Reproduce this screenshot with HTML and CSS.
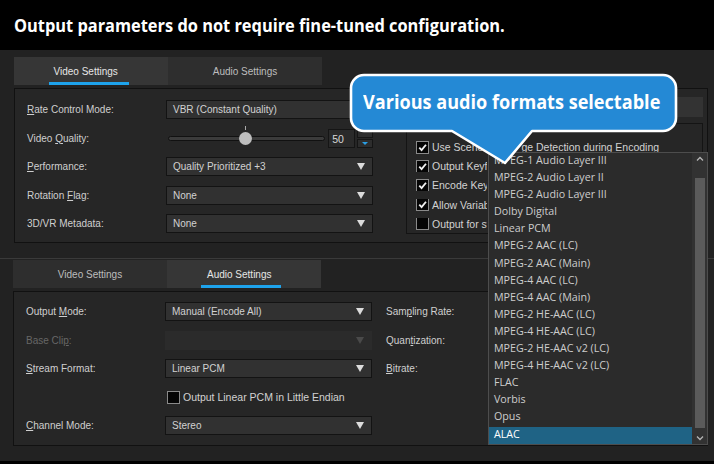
FILE: index.html
```html
<!DOCTYPE html>
<html>
<head>
<meta charset="utf-8">
<link rel="stylesheet" href="styles.css">
</head>
<body>
<div class="page">
  <header class="title"><span class="title-text">Output parameters do not require fine-tuned configuration.</span></header>

  <section class="shot shot-video">
    <div class="tabs">
      <div class="tab active"><span>Video Settings</span></div>
      <div class="tab"><span>Audio Settings</span></div>
    </div>
    <div class="panel video-panel">
      <div class="form">
        <div class="lbl"><u>R</u>ate Control Mode:</div>
        <div class="combo wide">VBR (Constant Quality)</div>

        <div class="lbl">Video <u>Q</u>uality:</div>
        <div class="quality">
          <div class="slider"><div class="track"></div><div class="tick"></div><div class="thumb"></div></div>
          <div class="spin">50</div>
          <div class="spinbtns"><div class="sb up"></div><div class="sb down"><i class="tri-blue"></i></div></div>
        </div>

        <div class="lbl"><u>P</u>erformance:</div>
        <div class="combo"><span>Quality Prioritized +3</span><i class="arrow"></i></div>

        <div class="lbl">Rotation <u>F</u>lag:</div>
        <div class="combo"><span>None</span><i class="arrow"></i></div>

        <div class="lbl">3D/VR Metadata:</div>
        <div class="combo"><span>None</span><i class="arrow"></i></div>
      </div>
      <div class="right">
        <div class="rbar"></div>
        <div class="group">
          <div class="chk-row"><span class="chk on"><svg viewBox="0 0 12 12"><path d="M2.5 6.2 L5 8.8 L9.8 3"/></svg></span><span class="scene-a">Use Scene</span><span class="scene-b">ge Detection during Encoding</span></div>
          <div class="chk-row clip"><span class="chk on"><svg viewBox="0 0 12 12"><path d="M2.5 6.2 L5 8.8 L9.8 3"/></svg></span>Output Keyframe Information</div>
          <div class="chk-row clip"><span class="chk on"><svg viewBox="0 0 12 12"><path d="M2.5 6.2 L5 8.8 L9.8 3"/></svg></span>Encode Keyframes as IDR</div>
          <div class="chk-row clip"><span class="chk on"><svg viewBox="0 0 12 12"><path d="M2.5 6.2 L5 8.8 L9.8 3"/></svg></span>Allow Variable Frame Rate</div>
          <div class="chk-row clip"><span class="chk"></span>Output for streaming</div>
        </div>
      </div>
    </div>
  </section>

  <div class="sep"></div>

  <section class="shot shot-audio">
    <div class="tabs">
      <div class="tab"><span>Video Settings</span></div>
      <div class="tab active"><span>Audio Settings</span></div>
    </div>
    <div class="panel audio-panel">
      <div class="aform">
        <div class="lbl">Output <u>M</u>ode:</div>
        <div class="combo"><span>Manual (Encode All)</span><i class="arrow"></i></div>
        <div class="lbl2">Sam<u>p</u>ling Rate:</div>

        <div class="lbl disabled">Base Cli<u>p</u>:</div>
        <div class="combo dis"><span></span><i class="arrow"></i></div>
        <div class="lbl2">Quan<u>t</u>ization:</div>

        <div class="lbl"><u>S</u>tream Format:</div>
        <div class="combo"><span>Linear PCM</span><i class="arrow"></i></div>
        <div class="lbl2"><u>B</u>itrate:</div>

        <div class="lbl"></div>
        <div class="chk-row endian"><span class="chk"></span>Output Linear PCM in Little Endian</div>
        <div class="lbl2"></div>

        <div class="lbl"><u>C</u>hannel Mode:</div>
        <div class="combo"><span>Stereo</span><i class="arrow"></i></div>
        <div class="lbl2"></div>
      </div>
    </div>
  </section>
  <div class="bottom"></div>

  <div class="dropdown">
    <ul class="items">
      <li>MPEG-1 Audio Layer III</li>
      <li>MPEG-2 Audio Layer II</li>
      <li>MPEG-2 Audio Layer III</li>
      <li>Dolby Digital</li>
      <li>Linear PCM</li>
      <li>MPEG-2 AAC (LC)</li>
      <li>MPEG-2 AAC (Main)</li>
      <li>MPEG-4 AAC (LC)</li>
      <li>MPEG-4 AAC (Main)</li>
      <li>MPEG-2 HE-AAC (LC)</li>
      <li>MPEG-4 HE-AAC (LC)</li>
      <li>MPEG-2 HE-AAC v2 (LC)</li>
      <li>MPEG-4 HE-AAC v2 (LC)</li>
      <li>FLAC</li>
      <li>Vorbis</li>
      <li>Opus</li>
      <li class="sel">ALAC</li>
    </ul>
    <div class="scrollbar">
      <svg class="chev" viewBox="0 0 10 8"><path d="M2 5.5 L5 2.5 L8 5.5"/></svg>
      <div class="thumbbar"></div>
      <svg class="chev" viewBox="0 0 10 8"><path d="M2 2.5 L5 5.5 L8 2.5"/></svg>
    </div>
  </div>

  <svg class="bubble" width="714" height="464" viewBox="0 0 714 464">
    <path d="M364 75 H663 A13 13 0 0 1 676 88 V118 A13 13 0 0 1 663 131 H532 L505 163 L452 131 H364 A13 13 0 0 1 351 118 V88 A13 13 0 0 1 364 75 Z"/>
  </svg>
  <div class="bubble-text"><span>Various audio formats selectable</span></div>
</div>
</body>
</html>
```

FILE: styles.css
```css
* { box-sizing: border-box; }
html, body { margin: 0; padding: 0; }
body { background: #000; width: 714px; height: 464px; overflow: hidden; }

.page {
  position: relative;
  width: 714px;
  height: 464px;
  font-family: "Liberation Sans", Arial, sans-serif;
  font-size: 10px;
  color: #cfcfcf;
}

.title {
  height: 50px;
  background: #000;
  padding: 13px 0 0 14px;
}
.title-text {
  display: inline-block;
  font-family: "Open Sans", "Noto Sans", sans-serif;
  font-weight: 700;
  font-size: 18px;
  line-height: 24px;
  color: #fff;
  transform: scaleX(0.91);
  transform-origin: left center;
  white-space: nowrap;
}

.shot {
  background: #222;
}
.shot-video { height: 208px; padding: 7px 6px 0 14px; }
.sep { height: 1px; background: #3a3a3a; }
.shot-audio { height: 202px; padding: 1px 6px 0 13px; }
.bottom { height: 3px; background: #000; }

.tabs { display: flex; height: 28px; }
.tab {
  width: 154px;
  background: #2e2e2e;
  display: flex;
  justify-content: center;
  align-items: flex-start;
  padding-top: 9px;
  color: #bdbdbd;
}
.tab.active { background: #363636; color: #e6e6e6; }
.tab span { display: block; }
.tab.active span::after {
  content: "";
  display: block;
  width: 80px;
  height: 3px;
  margin: 5px 0 0 -6px;
  background: #1ea3ec;
}
.shot-video .tab.active span::after { margin-left: -5px; }
.shot-audio .tab.active span::after { margin-left: -6px; }

.panel {
  margin-top: 3px;
  height: 155px;
  background: #262626;
  border: 1px solid #111;
}

.video-panel {
  display: flex;
  padding: 11px 0 9px 12px;
}
.form {
  display: grid;
  grid-template-columns: 139px 207px;
  grid-auto-rows: 19px;
  row-gap: 9.5px;
  align-items: center;
}
.lbl { white-space: nowrap; }
.lbl.disabled { color: #666; }
.lbl2 { white-space: nowrap; padding-left: 14px; }
u { text-decoration-thickness: 1px; text-underline-offset: 1px; }

.combo {
  height: 19px;
  background: #313131;
  border: 1px solid #131313;
  display: flex;
  align-items: center;
  padding: 0 7px 0 6px;
  color: #d2d2d2;
  white-space: nowrap;
}
.combo span { flex: 1; }
.combo.dis { background: #2b2b2b; border-color: #2b2b2b; }
.combo.dis .arrow { border-top-color: #4a4a4a; }
.arrow {
  width: 0; height: 0;
  border-left: 4px solid transparent;
  border-right: 4px solid transparent;
  border-top: 7px solid #dcdcdc;
}

.quality { display: flex; align-items: center; height: 19px; }
.slider { position: relative; width: 158px; height: 19px; margin-left: 2px; }
.track {
  position: absolute; left: 0; right: 0; top: 7px; height: 5px;
  border-radius: 3px; background: #3b3b3b; border: 1px solid #111;
}
.tick { position: absolute; left: 77px; top: -3px; width: 1px; height: 4px; background: #aaa; }
.thumb {
  position: absolute; left: 71px; top: 3px; width: 13px; height: 13px;
  border-radius: 50%; background: #bebebe;
}
.spin {
  width: 27px; height: 19px; margin-left: 3px;
  background: #2a2a2a; border: 1px solid #151515;
  padding: 3px 0 0 3px; color: #d8d8d8; font-size: 10.5px;
}
.spinbtns { display: flex; flex-direction: column; gap: 1px; margin-left: 2px; width: 16px; height: 19px; }
.sb { flex: 1; background: #2d2d2d; border: 1px solid #151515; display: flex; align-items: center; justify-content: center; }
.tri-blue {
  width: 0; height: 0;
  border-left: 3px solid transparent; border-right: 3px solid transparent;
  border-top: 3px solid #2a9ee4;
}

.right { margin-left: 33px; width: 297px; }
.rbar { height: 20px; margin-top: -3px; background: #333; }
.group {
  margin-top: 6px;
  height: 111px;
  border: 1px solid #141414;
  padding: 17px 0 0 9px;
  display: flex;
  flex-direction: column;
  gap: 7.2px;
}
.chk-row { display: flex; align-items: center; height: 12px; white-space: nowrap; color: #d2d2d2; font-size: 10.5px; }
.chk-row.clip { width: 71px; overflow: hidden; }
.scene-b { margin-left: 38px; }
.chk {
  width: 13px; height: 13px; flex: none;
  background: #050505; border: 1px solid #8a8a8a;
  margin-right: 3px;
  display: flex;
}
.chk svg { width: 11px; height: 11px; }
.chk svg path { fill: none; stroke: #f2f2f2; stroke-width: 2; }

.audio-panel { padding: 10px 0 0 12px; }
.aform {
  display: grid;
  grid-template-columns: 139px 207px auto;
  grid-auto-rows: 19px;
  row-gap: 9.5px;
  align-items: center;
}
.endian { padding-left: 2px; }

.dropdown {
  position: absolute;
  left: 488px; top: 152px;
  width: 220px; height: 293px;
  background: #2b2b2b;
  border: 1px solid #4d4d4d;
  display: flex;
}
.items {
  list-style: none; margin: 0; padding: 0;
  flex: 1;
  font-family: "Open Sans", "Noto Sans", sans-serif;
  font-size: 10.7px;
  color: #cdcdcd;
}
.items li { height: 17.1px; line-height: 15px; padding-left: 5px; white-space: nowrap; }
.items li.sel { background: #1f6385; color: #fff; }
.scrollbar {
  width: 15px;
  background: #323232;
  display: flex; flex-direction: column; align-items: center;
  padding: 2px 0 2px;
}
.chev { width: 10px; height: 8px; flex: none; }
.chev path { fill: none; stroke: #b5b5b5; stroke-width: 1.3; }
.thumbbar { width: 10px; flex: 1; margin: 15px 0 6px; background: #5b5b5b; }

.bubble { position: absolute; left: 0; top: 0; pointer-events: none; }
.bubble path { fill: #2489d5; stroke: #fff; stroke-width: 2.6; stroke-linejoin: round; }
.bubble-text {
  position: absolute;
  left: 363px; top: 89px;
  color: #fff;
  font-family: "Open Sans", "Noto Sans", sans-serif;
  font-weight: 700;
  font-size: 20px;
  line-height: 26px;
  white-space: nowrap;
}
.bubble-text span { display: inline-block; transform: scaleX(0.905); transform-origin: left center; }
```
